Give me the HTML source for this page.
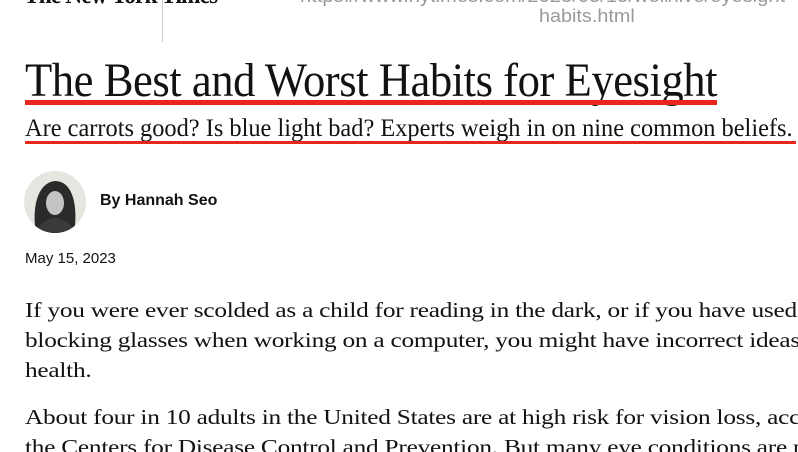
<!DOCTYPE html>
<html><head><meta charset="utf-8"><style>
body{margin:0;width:798px;height:452px;overflow:hidden;background:#fff;position:relative;font-family:"Liberation Serif",serif;color:#121212}
#w{position:absolute;left:0;top:0;width:798px;height:452px;overflow:hidden}
.a{position:absolute;white-space:nowrap}
</style></head><body><div id="w">
<div class="a" style="left:24px;top:-20px;font-family:'Liberation Serif',serif;font-weight:bold;font-size:26px;letter-spacing:-1px;transform:scaleX(0.9);transform-origin:left">The New York Times</div>
<div style="position:absolute;left:162px;top:0;width:1px;height:42px;background:#ccc"></div>
<div class="a" style="left:300px;top:-14px;font-family:'Liberation Sans',sans-serif;font-size:18px;color:#999;transform:scaleX(1.12);transform-origin:left">https://www.nytimes.com/2023/05/15/well/live/eyesight-</div>
<div class="a" style="left:539px;top:6px;font-family:'Liberation Sans',sans-serif;font-size:18px;color:#999;transform:scaleX(1.1);transform-origin:left">habits.html</div>
<div class="a" style="left:25px;top:53px;font-size:48px;transform:scaleX(0.93);transform-origin:left;letter-spacing:-0.5px">The Best and Worst Habits for Eyesight</div>
<div style="position:absolute;left:25px;top:100px;width:692px;height:5px;background:#e8261c"></div>
<div class="a" style="left:25px;top:115px;font-size:25px;transform:scaleX(0.975);transform-origin:left">Are carrots good? Is blue light bad? Experts weigh in on nine common beliefs.</div>
<div style="position:absolute;left:25px;top:141px;width:771px;height:3px;background:#e8261c"></div>
<svg style="position:absolute;left:24px;top:171px" width="62" height="62" viewBox="0 0 62 62"><clipPath id="c"><circle cx="31" cy="31" r="31"/></clipPath><g clip-path="url(#c)"><rect width="62" height="62" fill="#e6e6e1"/><path d="M12 62 C8 40 12 12 31 10 C50 10 54 38 50 62 Z" fill="#2a2a2a"/><ellipse cx="31" cy="32" rx="9" ry="12" fill="#c4c4c4"/><path d="M10 62 C16 52 24 47 31 47 C40 47 48 54 52 62 Z" fill="#3a3a3a"/></g></svg>
<div class="a" style="left:100px;top:192px;font-family:'Liberation Sans',sans-serif;font-weight:bold;font-size:16px">By Hannah Seo</div>
<div class="a" style="left:25px;top:250px;font-family:'Liberation Sans',sans-serif;font-size:15px">May 15, 2023</div>
<div class="a" style="left:25px;top:295px;font-size:21px;line-height:30px;letter-spacing:-0.2px;transform:scaleX(1.205);transform-origin:left">If you were ever scolded as a child for reading in the dark, or if you have used blue-light-<br>blocking glasses when working on a computer, you might have incorrect ideas about eye<br>health.</div>
<div class="a" style="left:25px;top:402px;font-size:21px;line-height:30px;letter-spacing:-0.2px;transform:scaleX(1.205);transform-origin:left">About four in 10 adults in the United States are at high risk for vision loss, according to<br>the Centers for Disease Control and Prevention. But many eye conditions are preventable.</div>
</div></body></html>
